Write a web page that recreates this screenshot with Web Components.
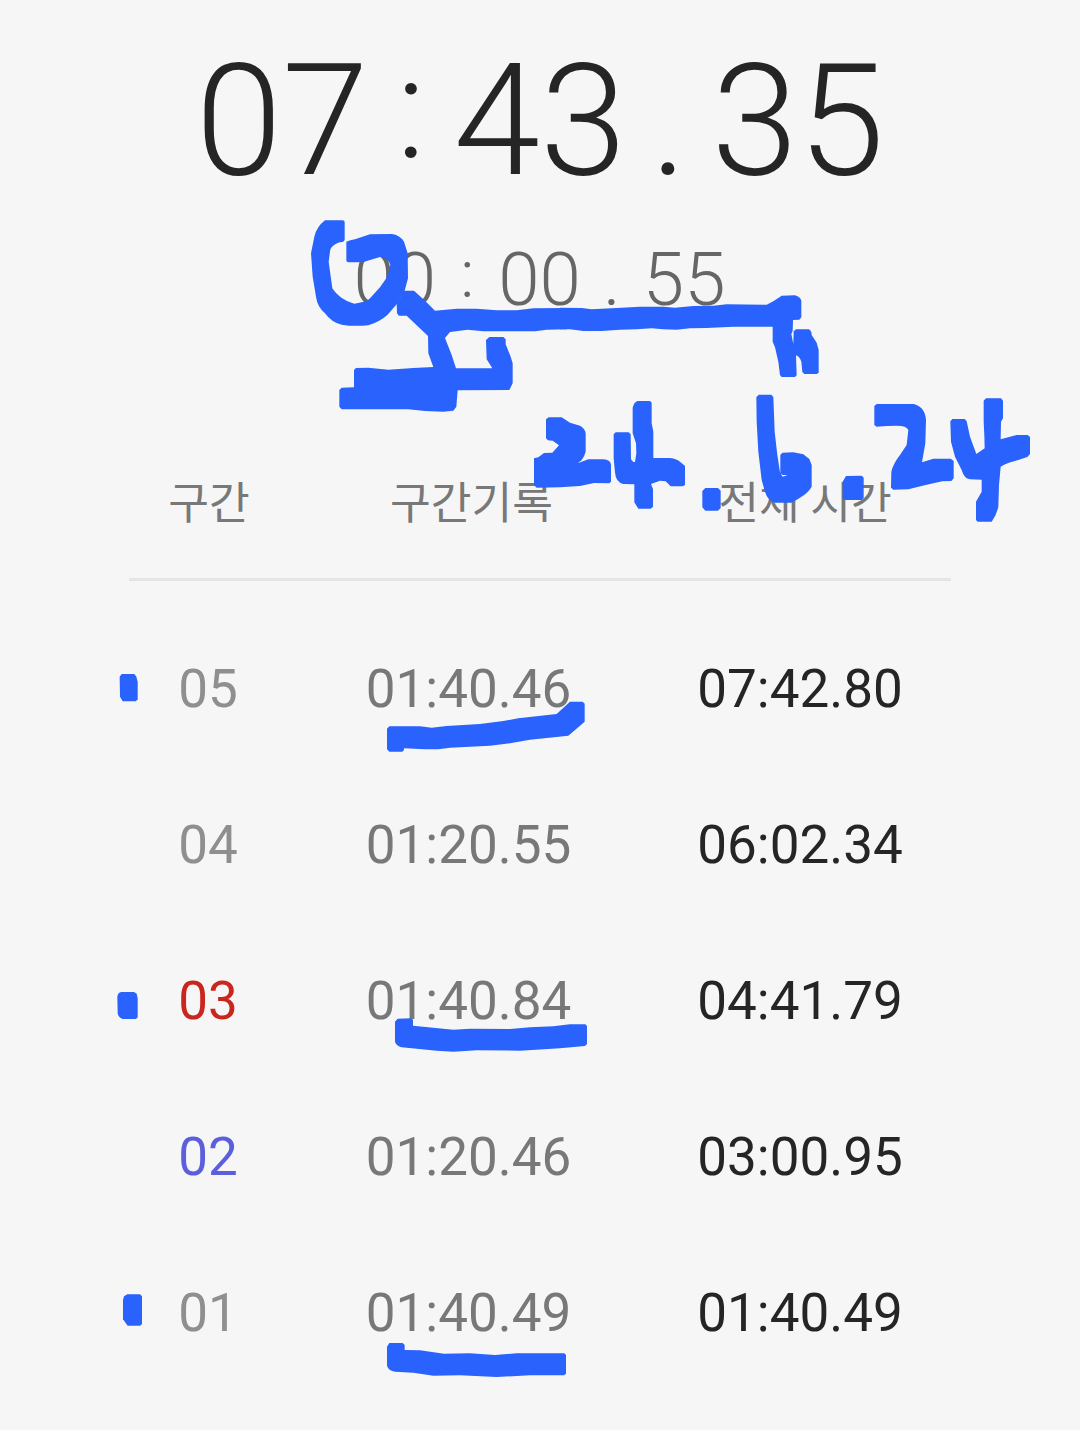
<!DOCTYPE html>
<html lang="ko">
<head>
<meta charset="utf-8">
<title>스톱워치</title>
<style>
  body {
    margin: 0;
    background: #f6f6f6;
    font-family: Roboto, "Noto Sans CJK KR", sans-serif;
  }
</style>
</head>
<body>
<stopwatch-app></stopwatch-app>

<script>
class TimeReadout extends HTMLElement {

  constructor() {
    super();
    this.attachShadow({ mode: 'open' });
  }

  connectedCallback() {
    const [min, sec, hund] = this.getAttribute('value').split(/[:.]/);

    this.shadowRoot.innerHTML = `
      <style>
        :host {
          display: flex;
          justify-content: center;
          font-weight: 300;
          line-height: 1;
          white-space: nowrap;
        }

        .sep {
          width: var(--time-readout-gap, 85px);
          text-align: center;
        }

        /* the colon sits at the middle of the digits */
        .colon {
          font-size: .9em;
          line-height: 0;
          vertical-align: .12em;
        }
      </style>

      <span>${min}</span><span class="sep"><span class="colon">:</span></span><span>${sec}</span><span class="sep">.</span><span>${hund}</span>
    `;
  }
}

customElements.define('time-readout', TimeReadout);


class LapRow extends HTMLElement {

  constructor() {
    super();
    this.attachShadow({ mode: 'open' });
  }

  connectedCallback() {
    this.shadowRoot.innerHTML = `
      <style>
        :host {
          display: grid;
          grid-template-columns: 158px 363px 300px;
          align-items: center;
          justify-items: center;
          height: 156px;
          font-size: 53px;
          line-height: 1;
          color: #787878;
        }

        .lap { color: #8f8f8f; }
        .total { color: #252525; }

        :host([slowest]) .lap { color: #c9271e; }
        :host([fastest]) .lap { color: #5b5fdc; }
      </style>

      <span class="lap"><slot name="lap"></slot></span>
      <span><slot name="time"></slot></span>
      <span class="total"><slot name="total"></slot></span>
    `;
  }
}

customElements.define('lap-row', LapRow);


class LapTable extends HTMLElement {

  constructor() {
    super();
    this.attachShadow({ mode: 'open' });
  }

  connectedCallback() {
    this.shadowRoot.innerHTML = `
      <style>
        :host {
          display: block;
          width: 822px;
          margin: 0 auto;
        }

        header {
          display: grid;
          grid-template-columns: 160px 365px 302px;
          justify-items: center;
          box-sizing: border-box;
          height: 112px;
          border-bottom: 3px solid #e5e5e5;
          margin-bottom: 30px;
          color: #787878;
          font: 44.3px/62px "Noto Sans CJK KR", sans-serif;
          word-spacing: -2px;
          white-space: nowrap;
        }
      </style>

      <header><span>구간</span><span>구간기록</span><span>전체 시간</span></header>
      <slot></slot>
    `;
  }
}

customElements.define('lap-table', LapTable);


// Each mark is an origin on the page and an outline in thirds of a pixel.
const MARKS = [
  [300, 210, 'M75,31 L128,31 Q134,31 134,37 L134,90 Q131,97 122,97 C108,98 90,112 90,125 L86,155 L97,235 C110,255 135,275 163,281 C185,278 200,275 210,265 L240,232 L262,200 L271,165 Q262,140 240,141 L188,157 L145,157 Q139,157 139,150 L139,95 Q150,90 165,88 L210,73 L275,72 Q300,75 312,95 L323,130 L324,205 L314,242 L290,283 L262,315 Q240,335 205,346 Q160,350 125,344 Q95,338 75,310 Q52,290 48,260 L38,200 L33,130 L43,80 Q50,50 75,31Z'],
  [300, 210, 'M314,242 L342,242 L375,272 L405,302 L470,296 L530,296 L590,301 L650,301 L700,295 L800,294 L800,358 L740,359 L705,364 L550,364 L503,359 L450,366 L435,384 L455,435 L468,475 L577,475 L560,448 L558,390 L568,381 L610,381 L617,388 L617,403 L632,440 L638,460 L638,520 L628,540 L473,541 L469,590 L460,602 L430,605 L375,603 L325,598 L125,598 L118,590 L118,540 L125,533 L162,532 L162,480 L168,474 L205,473 L265,479 L340,474 L400,471 L385,430 L384,378 L320,317 L297,317 L291,310 L290,280Z'],
  [560, 230, 'M0,233 L65,234 L95,238 L170,234 L240,230 L310,230 L345,233 L400,228 L460,227 L500,223 L620,224 L640,214 L665,197 L705,196 Q722,202 724,212 L724,262 L718,269 L699,270 L698,303 L694,312 L700,342 L701,304 L708,298 L747,298 Q755,303 755,315 L770,338 L776,360 L776,428 L770,432 L733,432 L727,426 L724,395 Q718,378 708,376 L710,436 L705,441 L665,441 L660,435 L655,395 L645,352 L638,335 L638,290 L520,290 L440,294 L390,295 L350,299 L310,298 L275,295 L230,298 L180,299 L125,303 L70,303 L30,298 L0,298Z'],
  [520, 385, 'M78,103 L86,97 L125,97 L150,113 L180,122 Q195,130 197,145 L197,200 Q190,225 173,235 L205,223 L250,223 Q273,225 273,240 L273,290 L268,295 L222,294 L180,303 L120,307 L50,308 L42,300 L42,220 L55,217 L72,204 L97,203 L117,181 L98,167 L84,166 L78,160Z'],
  [520, 385, 'M281,148 L287,142 L326,142 L332,148 L333,223 L340,231 L345,231 L349,205 L348,175 L338,145 L338,68 Q342,52 352,48 L390,48 L395,53 L395,115 L400,140 L400,219 L450,219 Q472,222 480,230 L495,243 L495,300 L488,304 L452,304 L437,289 L420,287 L393,297 L399,312 L399,365 L392,371 L355,371 L343,352 L343,298 L310,297 Q287,292 285,262 L281,220Z'],
  [520, 385, 'M556,309 L594,309 L602,317 L602,369 L594,377 L556,377 L547,367 L547,318Z'],
  [740, 385, 'M49,37 L56,29 L94,29 L100,36 L104,140 L112,210 L120,262 L128,275 L143,270 L128,270 L121,264 L121,210 L127,203 L160,202 L190,208 L208,222 L215,240 L215,305 Q205,323 180,338 L155,353 L105,353 Q82,345 75,320 L65,285 L55,200 L50,110Z'],
  [740, 385, 'M308,340 L308,290 L318,273 L365,272 L371,278 L371,338 L365,345 L313,345Z'],
  [740, 385, 'M403,63 L410,57 L520,57 Q555,65 558,105 L556,175 L546,232 L580,221 L632,221 L641,228 L641,280 L634,288 L607,289 L560,299 L505,313 L460,314 L453,308 L454,260 Q460,235 480,210 L500,180 L505,135 Q500,122 470,122 L440,123 L410,125 L403,120Z'],
  [740, 385, 'M631,109 L637,102 L674,102 L680,109 L690,155 L709,207 L734,190 L733,150 L731,110 L731,47 L738,40 L783,40 L789,47 L789,100 L783,110 L782,163 L830,150 L863,150 L870,156 L870,207 L862,216 L825,228 Q795,236 782,245 L777,300 L775,365 Q770,390 755,410 L713,410 L708,405 L708,350 L725,320 L725,284 L690,283 Q672,280 665,255 L645,215 L633,170Z'],
  [100, 650, 'M59,80 L65,72 L103,72 L109,80 L113,95 L113,148 L107,154 L68,154 L60,140Z'],
  [100, 650, 'M861,236 L868,229 L960,229 L995,233 L1040,228 L1140,222 L1210,213 L1255,205 L1370,192 L1410,155 L1448,155 L1454,161 L1454,215 L1405,257 L1290,269 L1230,280 L1170,287 L1050,293 L1015,298 L975,298 L912,295 L912,300 L907,305 L868,305 L861,298Z'],
  [100, 970, 'M52,80 Q54,67 64,66 L102,66 L110,71 L113,85 L113,142 L108,147 L68,147 Q54,142 53,130Z'],
  [100, 970, 'M885,155 L893,146 L934,145 L939,150 L939,167 L1060,179 L1110,176 L1230,177 L1290,172 L1360,169 L1410,163 L1456,163 L1461,168 L1461,222 L1455,228 L1380,235 L1260,242 L1130,241 L1060,245 L1010,242 L905,232 Q889,228 885,215Z'],
  [100, 1280, 'M69,60 L72,49 L82,43 L120,43 L126,49 L126,132 L120,137 L83,137 L69,118Z'],
  [100, 1280, 'M861,200 L868,189 L908,189 L914,195 L914,210 L960,211 L1032,221 L1110,220 L1185,225 L1250,220 L1393,220 L1398,225 L1398,281 L1392,286 L1290,286 L1190,291 L1080,286 L1000,287 L940,278 L885,275 Q861,270 861,255Z']
];

class InkLayer extends HTMLElement {

  constructor() {
    super();
    this.attachShadow({ mode: 'open' });
  }

  connectedCallback() {
    this.shadowRoot.innerHTML = `
      <style>
        :host {
          display: block;
          position: absolute;
          inset: 0;
          pointer-events: none;
        }

        svg { display: block; fill: #2962fc; }
      </style>

      <svg width="1080" height="1430" viewBox="0 0 1080 1430" aria-hidden="true">
        ${MARKS.map(([x, y, d]) => `<path transform="translate(${x} ${y}) scale(.33333)" d="${d}"/>`).join('')}
      </svg>
    `;
  }
}

customElements.define('ink-layer', InkLayer);


const LAPS = [
  ['05', '01:40.46', '07:42.80', ''],
  ['04', '01:20.55', '06:02.34', ''],
  ['03', '01:40.84', '04:41.79', 'slowest'],
  ['02', '01:20.46', '03:00.95', 'fastest'],
  ['01', '01:40.49', '01:40.49', '']
];

class StopwatchApp extends HTMLElement {

  constructor() {
    super();
    this.attachShadow({ mode: 'open' });
  }

  connectedCallback() {
    this.shadowRoot.innerHTML = `
      <style>
        :host {
          display: block;
          position: relative;
          box-sizing: border-box;
          width: 1080px;
          height: 1430px;
          padding-top: 43px;
          overflow: hidden;
        }

        .elapsed {
          height: 200px;
          font-size: 156px;
          color: #252525;
        }

        .current {
          --time-readout-gap: 62px;
          height: 226px;
          margin-right: 1px;
          font-size: 74.5px;
          color: #666;
        }
      </style>

      <time-readout class="elapsed" value="07:43.35"></time-readout>
      <time-readout class="current" value="00:00.55"></time-readout>
      <lap-table>
        ${LAPS.map(([lap, time, total, mark]) => `
          <lap-row ${mark}>
            <span slot="lap">${lap}</span>
            <span slot="time">${time}</span>
            <span slot="total">${total}</span>
          </lap-row>`).join('')}
      </lap-table>
      <ink-layer></ink-layer>
    `;
  }
}

customElements.define('stopwatch-app', StopwatchApp);
</script>
</body>
</html>
